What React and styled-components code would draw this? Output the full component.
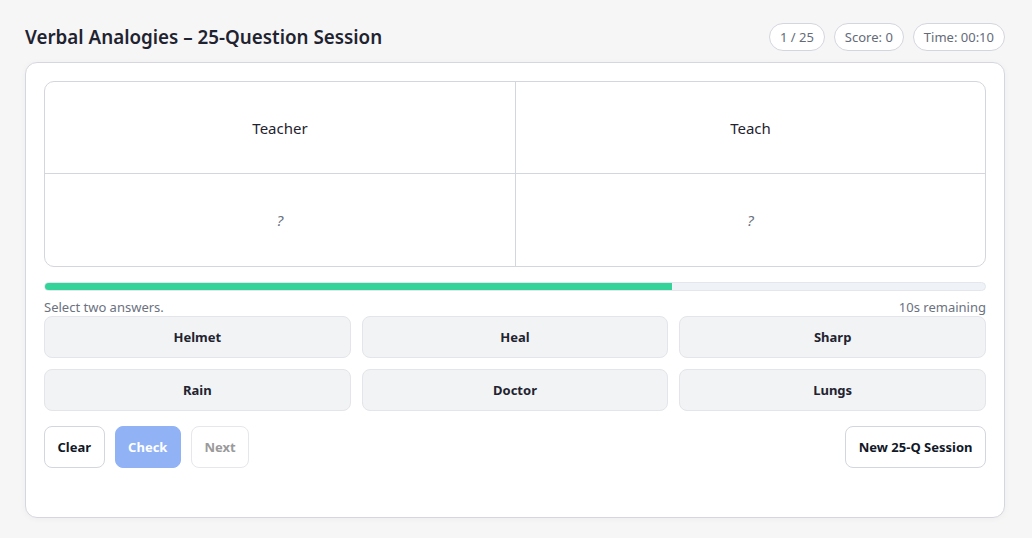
import React from 'react'
import styled, { createGlobalStyle } from 'styled-components'

const GlobalStyle = createGlobalStyle`
  * { box-sizing: border-box; }
  body {
    margin: 0;
    background: #f6f6f7;
    font-family: "Noto Sans", "Open Sans", sans-serif;
    color: #111827;
  }
`

const pair = { a: 'Teacher', b: 'Teach' }
const options = ['Helmet', 'Heal', 'Sharp', 'Rain', 'Doctor', 'Lungs']
const progress = 10 / 15

const App = () => (
  <>
    <GlobalStyle />
    <Page>
      <Header>
        <Title>Verbal Analogies – 25-Question Session</Title>
        <Pills>
          <Pill>1 / 25</Pill>
          <Pill>Score: 0</Pill>
          <Pill>Time: 00:10</Pill>
        </Pills>
      </Header>
      <Card>
        <Board>
          <Cell>{pair.a}</Cell>
          <Cell right>{pair.b}</Cell>
          <Cell bottom blank>?</Cell>
          <Cell bottom right blank>?</Cell>
        </Board>
        <Track>
          <Fill style={{ width: `${progress * 100}%` }} />
        </Track>
        <Meta>
          <span>Select two answers.</span>
          <span>10s remaining</span>
        </Meta>
        <Options>
          {options.map(o => (
            <Option key={o}>{o}</Option>
          ))}
        </Options>
        <Actions>
          <Group>
            <Button>Clear</Button>
            <Button variant="primary">Check</Button>
            <Button variant="disabled">Next</Button>
          </Group>
          <Button>New 25-Q Session</Button>
        </Actions>
      </Card>
    </Page>
  </>
)

export default App

const Page = styled.div`
  padding: 23px 27px 20px 25px;
`

const Header = styled.div`
  display: flex;
  align-items: center;
  justify-content: space-between;
  margin-bottom: 11px;
`

const Title = styled.h1`
  margin: 0;
  font-size: 18.8px;
  font-weight: 600;
  color: #1f2330;
`

const Pills = styled.div`
  display: flex;
  gap: 9px;
`

const Pill = styled.span`
  display: inline-flex;
  align-items: center;
  height: 28px;
  padding: 0 10px;
  border: 1px solid #d4d6dd;
  border-radius: 999px;
  background: #fff;
  font-size: 13px;
  color: #646b78;
`

const Card = styled.div`
  background: #fff;
  border: 1px solid #d6d7de;
  border-radius: 12px;
  box-shadow: 0 1px 6px rgba(0, 0, 0, 0.04);
  padding: 18px 18px 48px;
  height: 456px;
`

const Board = styled.div`
  display: grid;
  grid-template-columns: 1fr 1fr;
  grid-template-rows: 91px 93px;
  border: 1px solid #d4d6dd;
  border-radius: 10px;
  overflow: hidden;
`

const Cell = styled.div`
  display: flex;
  align-items: center;
  justify-content: center;
  font-size: 15px;
  color: ${p => (p.blank ? '#6b7280' : '#1f2330')};
  font-style: ${p => (p.blank ? 'italic' : 'normal')};
  border-left: ${p => (p.right ? '1px solid #d4d6dd' : 'none')};
  border-top: ${p => (p.bottom ? '1px solid #d4d6dd' : 'none')};
`

const Track = styled.div`
  margin-top: 15px;
  height: 9px;
  border: 1px solid #e3e6ec;
  border-radius: 999px;
  background: #eff2f6;
  overflow: hidden;
`

const Fill = styled.div`
  height: 100%;
  background: #34d399;
`

const Meta = styled.div`
  display: flex;
  justify-content: space-between;
  margin-top: 7px;
  font-size: 13px;
  line-height: 18px;
  color: #6b7280;
`

const Options = styled.div`
  display: grid;
  grid-template-columns: repeat(3, 1fr);
  gap: 11px;
`

const Option = styled.button`
  height: 42px;
  border: 1px solid #e3e5ea;
  border-radius: 8px;
  background: #f2f3f5;
  font-family: inherit;
  font-size: 13px;
  font-weight: 700;
  color: #1f2330;
`

const Actions = styled.div`
  display: flex;
  justify-content: space-between;
  margin-top: 15px;
`

const Group = styled.div`
  display: flex;
  gap: 10px;
`

const variants = {
  default: { bg: '#fff', border: '#d4d6dd', color: '#111827' },
  primary: { bg: '#91b2f5', border: '#91b2f5', color: '#fff' },
  disabled: { bg: '#fff', border: '#e5e7eb', color: '#9a9a9a' },
}

const Button = styled.button`
  height: 42px;
  padding: 0 12.5px;
  border-radius: 8px;
  font-family: inherit;
  font-size: 13px;
  font-weight: 700;
  background: ${p => variants[p.variant || 'default'].bg};
  border: 1px solid ${p => variants[p.variant || 'default'].border};
  color: ${p => variants[p.variant || 'default'].color};
`
